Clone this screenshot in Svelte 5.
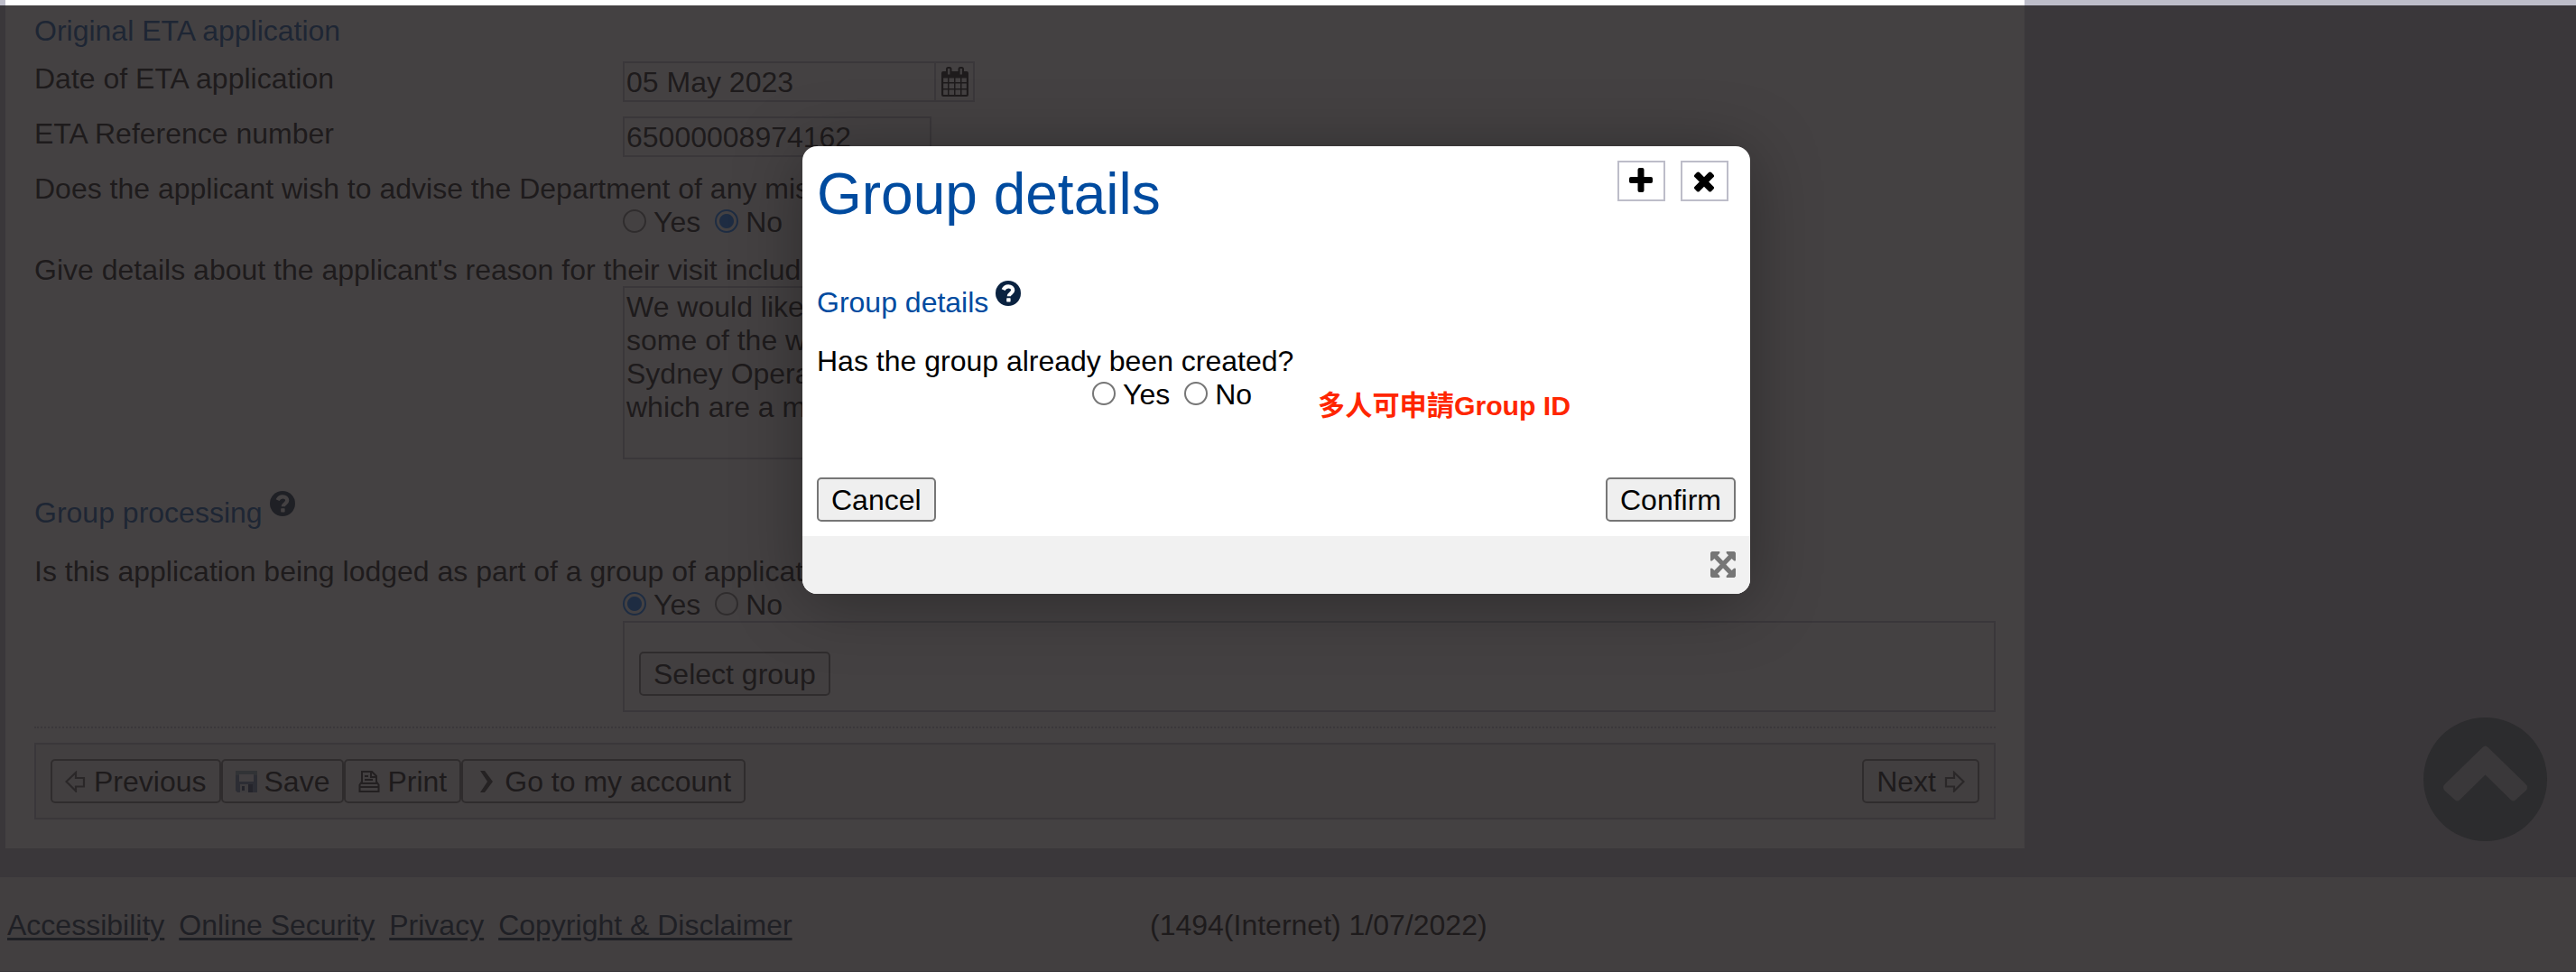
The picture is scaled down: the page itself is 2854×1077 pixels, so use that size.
<script>
  let original = $state('No');
  let lodged = $state('Yes');
  let created = $state('');
  const reason = ['We would like', 'some of the w', 'Sydney Opera', 'which are a m'];
  const links = ['Accessibility', 'Online Security', 'Privacy', 'Copyright & Disclaimer'];
</script>

{#snippet help()}
  <svg class="help" viewBox="0 0 28 28"><circle cx="14" cy="14" r="14" /><path class="q" d="M8.6 10.2C9.8 7.6 11.8 6.4 14.2 6.4c3 0 5 1.8 5 4.2 0 3.4-4.4 3.6-4.4 6.6" /><rect class="dot" x="12.2" y="19.2" width="4.4" height="4.2" rx=".6" /></svg>
{/snippet}

{#snippet radios(name, value, set)}
  <div class="radios">
    {#each ['Yes', 'No'] as option}
      <label><input type="radio" {name} checked={value === option} onchange={() => set(option)} /><span>{option}</span></label>
    {/each}
  </div>
{/snippet}

<div class="page">
  <main class="panel">
    <h2 class="h-original">Original ETA application</h2>
    <div class="row r-date">
      <span class="label">Date of ETA application</span>
      <div class="field date">05 May 2023</div>
      <div class="cal">
        <svg width="30" height="33" viewBox="0 0 30 33"><path fill-rule="evenodd" d="M2 5H28Q30 5 30 7V31Q30 33 28 33H2Q0 33 0 31V7Q0 5 2 5ZM2.200 12.500V17H7V12.500ZM8.500 12.500V17H14V12.500ZM15.500 12.500V17H21V12.500ZM22.500 12.500V17H27.800V12.500ZM2.200 18.500V24H7V18.500ZM8.500 18.500V24H14V18.500ZM15.500 18.500V24H21V18.500ZM22.500 18.500V24H27.800V18.500ZM2.200 25.500V31H7V25.500ZM8.500 25.500V31H14V25.500ZM15.500 25.500V31H21V25.500ZM22.500 25.500V31H27.800V25.500Z" /><rect x="5" y="0" width="6.500" height="10.500" rx="2.500" /><rect x="18.500" y="0" width="6.500" height="10.500" rx="2.500" /><path stroke="#fff" stroke-width="2.200" d="M8.250 2v6.500M21.750 2v6.500" /></svg>
      </div>
    </div>
    <div class="row r-ref">
      <span class="label">ETA Reference number</span>
      <div class="field ref">65000008974162</div>
    </div>
    <p class="q-advise">Does the applicant wish to advise the Department of any mis</p>
    {@render radios('advise', original, (v) => (original = v))}
    <p class="q-reason">Give details about the applicant's reason for their visit includ</p>
    <div class="area">{#each reason as line}<div>{line}</div>{/each}</div>
    <h2 class="h-group">Group processing {@render help()}</h2>
    <p class="q-lodged">Is this application being lodged as part of a group of applicat</p>
    {@render radios('lodged', lodged, (v) => (lodged = v))}
    <div class="groupbox"><button>Select group</button></div>
    <div class="divider"></div>
    <div class="actions">
      <button><svg width="24" height="24" viewBox="0 0 24 24"><path fill="none" stroke="#555" stroke-width="2.200" d="M1.500 12L12 2V8H21V17.500H12V22.500Z" /></svg>Previous</button>
      <button><svg width="24" height="24" viewBox="0 0 24 24"><path fill="#5d779f" d="M0 0h24v24H2l-2-2z" /><path fill="#7fa3b0" d="M0 0h24v5H0z" /><path fill="#eef1f4" d="M4 4h16v8H4z" /><path fill="#dfe3ea" d="M5 15h14v9H5z" /><path fill="#2d3d66" d="M7 17h3v5H7zM14 15h5v9h-5z" /></svg>Save</button>
      <button><svg width="24" height="24" viewBox="0 0 24 24"><path fill="none" stroke="#222" stroke-width="2" d="M4 12V1h11l5 5V12M14 1v6h6M7 6h4M7 10h9M1.500 23V15.500L4 12V14h16V12l2.500 3.500V23zM2 18h20" /></svg>Print</button>
      <button><svg width="24" height="24" viewBox="0 0 24 24"><path fill="#333" d="M5 0h5l9 12-9 12H5l8-12z" /></svg>Go to my account</button>
      <button class="next">Next<svg width="24" height="24" viewBox="0 0 24 24"><path fill="none" stroke="#555" stroke-width="2.200" d="M22.500 12L12 2V8H3V17.500H12V22.500Z" /></svg></button>
    </div>
  </main>
  <footer>
    <nav>{#each links as link}<a href="#top">{link}</a>{/each}</nav>
    <span>(1494(Internet) 1/07/2022)</span>
  </footer>
  <div class="overlay"></div>
  <svg class="totop" viewBox="0 0 137 137"><circle cx="68.500" cy="68.500" r="68.500" /><path d="M65.500 33Q68.500 30 71.500 33L113 73.500Q117 77.500 113 81.500L102.500 91Q99.500 94 96.500 91L68.500 63.500 40.500 91Q37.500 94 34.500 91L24 81.500Q20 77.500 24 73.500Z" /></svg>

  <section class="modal">
    <header>
      <h1>Group details</h1>
      <div class="tools">
        <button class="tool" aria-label="Expand"><svg width="26" height="27" viewBox="0 0 26 27"><rect x="9.500" y="0" width="7" height="27" rx="2" /><rect x="0" y="10" width="26" height="7" rx="2" /></svg></button>
        <button class="tool close" aria-label="Close"><svg width="22" height="23" viewBox="0 0 22 23"><g transform="rotate(45 11 11.500)"><rect x="7.300" y="-1.500" width="7.400" height="26" rx="2" /><rect x="-2" y="7.800" width="26" height="7.400" rx="2" /></g></svg></button>
      </div>
    </header>
    <div class="body">
      <h2>Group details {@render help()}</h2>
      <p>Has the group already been created?</p>
      {@render radios('created', created, (v) => (created = v))}
      <div class="buttons"><button>Cancel</button><button>Confirm</button></div>
    </div>
    <div class="foot">
      <svg width="28" height="29" viewBox="0 0 28 29"><path d="M1.500 0H10Q11 1 10 2.200L8 4.200 14 10.500 20 4.200 18 2.200Q17 1 18 0H26.500L28 1.500V10Q27 11 25.800 10L23.600 8 17.300 14.500 23.600 21 25.800 19Q27 18 28 19V27.500L26.500 29H18Q17 28 18 26.800L20 24.800 14 18.500 8 24.800 10 26.800Q11 28 10 29H1.500L0 27.500V19Q1 18 2.200 19L4.400 21 10.700 14.500 4.400 8 2.200 10Q1 11 0 10V1.500Z" /></svg>
    </div>
    <div class="note">多人可申請Group ID</div>
  </section>
</div>

<style>
  :global(body) { margin: 0; }
  .page { position: relative; box-sizing: border-box; width: 2854px; height: 1077px; overflow: hidden; background: #bdbdc9; padding-left: 6px; font: 32px/37px "Liberation Sans", Arial, sans-serif; color: #000; }
  h1, h2, p { margin: 0; font-weight: 400; font-size: 32px; white-space: nowrap; }
  h2 { display: flex; gap: 8px; height: 37px; color: #004b9f; }
  .panel { box-sizing: border-box; width: 2237px; height: 940px; padding: 16px 32px 0; background: #fff; }
  .row { display: flex; align-items: flex-start; }
  .label { width: 652px; }
  .r-date { margin-top: 15px; }
  .r-date .label { padding-top: 1px; }
  .r-ref { margin-top: 16px; }
  .r-ref .label { padding-top: 1px; }
  .field { box-sizing: border-box; height: 45px; border: 2px solid #bdbdc9; padding: 3px 2px 0; }
  .date { width: 347px; }
  .ref { width: 342px; }
  .cal { box-sizing: border-box; width: 43px; height: 45px; border: 2px solid #bdbdc9; border-left: 0; display: flex; align-items: center; justify-content: center; }
  .q-advise { margin-top: 17px; }
  .radios { display: flex; gap: 16px; height: 37px; margin-left: 652px; }
  .radios label { display: flex; align-items: center; gap: 8px; }
  input { appearance: none; box-sizing: border-box; width: 26px; height: 26px; margin: 0 0 4px; border: 2px solid #767676; border-radius: 50%; background: #fff; }
  input:checked { border-color: #0075ff; background: radial-gradient(circle, #0075ff 0 7.500px, #fff 8.500px); }
  .q-reason { margin-top: 16px; }
  .area { box-sizing: border-box; width: 652px; height: 192px; margin: -1px 0 0 652px; padding: 3px 2px; border: 2px solid #bdbdc9; white-space: nowrap; }
  .h-group { margin-top: 41px; }
  .help { width: 28px; height: 28px; margin-top: -6px; fill: #0a2240; }
  .q { fill: none; stroke: #fff; stroke-width: 4.200; }
  .dot { fill: #fff; }
  .q-lodged { margin-top: 28px; }
  button { box-sizing: border-box; height: 49px; padding: 1px 14px 0; border: 2px solid #767676; border-radius: 5px; background: #efefef; font: 32px/37px "Liberation Sans", Arial, sans-serif; color: #000; display: flex; align-items: center; gap: 8px; white-space: nowrap; }
  .groupbox { box-sizing: border-box; height: 101px; margin: -1px 0 0 652px; padding: 32px 16px; border: 2px solid #bdbdc9; }
  .divider { margin-top: 16px; border-top: 2px dotted #bdbdc9; }
  .actions { box-sizing: border-box; height: 85px; margin-top: 16px; padding: 16px; border: 2px solid #bdbdc9; display: flex; background: #f1f1f1; }
  .next { margin-left: auto; }
  footer { box-sizing: border-box; display: flex; height: 105px; margin: 32px 0 0 -6px; padding: 35px 8px 0; background: #eee; border-bottom: 1px solid #bdbdc9; }
  nav { display: flex; gap: 16px; width: 1266px; }
  a { color: #0a2240; text-underline-offset: 3px; text-decoration-thickness: 3px; }
  .overlay { position: absolute; inset: 6px 0 0; background: rgba(35, 32, 33, .85); }
  .totop { position: absolute; left: 2685px; top: 795px; width: 137px; height: 137px; fill: #2c2c2e; }
  .totop path { fill: #3a383a; }
  .modal { position: absolute; box-sizing: border-box; left: 889px; top: 162px; width: 1050px; height: 496px; border-radius: 16px; background: #fff; box-shadow: 0 8px 75px rgba(0, 0, 0, .34); }
  header { display: flex; justify-content: space-between; height: 144px; padding: 16px 24px 0 16px; box-sizing: border-box; }
  h1 { font-size: 64px; line-height: 74px; color: #004b9f; }
  .tools { display: flex; gap: 17px; }
  .tool { width: 53px; height: 45px; padding: 0 1px 2px 0; border-color: #bdbdc9; border-radius: 0; background: #fff; justify-content: center; }
  .close { padding: 2px 1px 0 0; }
  .body { height: 288px; padding: 11px 16px 0; box-sizing: border-box; }
  .body p { margin-top: 28px; }
  .body .radios { margin-left: 305px; }
  .buttons { display: flex; justify-content: space-between; margin-top: 73px; }
  .foot { box-sizing: border-box; height: 64px; padding: 17px 16px; display: flex; justify-content: flex-end; background: #f1f1f1; border-radius: 0 0 16px 16px; fill: #767676; }
  .note { position: absolute; left: 571px; top: 270px; color: #ff2600; font: bold 30.2px/36px "Liberation Sans", "Noto Sans CJK TC", sans-serif; white-space: nowrap; }
</style>
